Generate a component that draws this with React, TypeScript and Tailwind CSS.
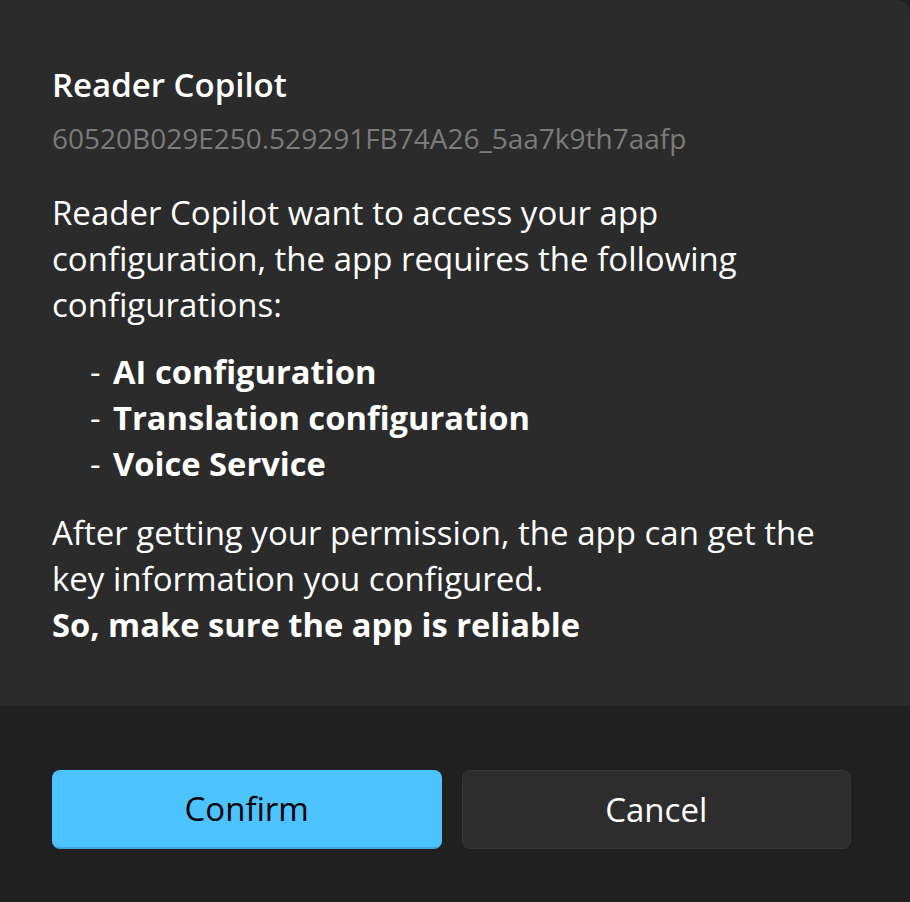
export default function App() {
  const font = { fontFamily: '"Segoe UI", "Open Sans", "Noto Sans", sans-serif' }

  return (
    <div className="w-[910px] h-[902px] flex flex-col bg-[#202020] overflow-hidden" style={font}>
      {/* Content */}
      <div className="h-[706px] shrink-0 bg-[#2b2b2b] rounded-tr-[14px] pl-[52px] pt-[65px] text-white">
        <h1 className="text-[33px] leading-[40px] font-semibold">Reader Copilot</h1>
        <p className="mt-[13px] text-[28px] leading-[40px] text-[#7c7c7c] whitespace-nowrap">
          60520B029E250.529291FB74A26_5aa7k9th7aafp
        </p>

        <div className="mt-[32px] text-[33px] leading-[46px] whitespace-nowrap">
          <p>
            <span className="block">Reader Copilot want to access your app</span>
            <span className="block">configuration, the app requires the following</span>
            <span className="block">configurations:</span>
          </p>

          <ul className="mt-[21px] pl-[38px] font-bold text-[32.7px]">
            <li><span className="font-normal mr-[4px]">- </span>AI configuration</li>
            <li><span className="font-normal mr-[4px]">- </span>Translation configuration</li>
            <li><span className="font-normal mr-[4px]">- </span>Voice Service</li>
          </ul>

          <p className="mt-[23px]">
            <span className="block">After getting your permission, the app can get the</span>
            <span className="block">key information you configured.</span>
            <span className="block font-bold text-[32.7px]">So, make sure the app is reliable</span>
          </p>
        </div>
      </div>

      {/* Footer */}
      <div className="flex-1 border-t border-[#1c1c1c] pl-[52px] pr-[59px] pt-[63px]">
        <div className="grid grid-cols-2 gap-[20px]">
          <button className="h-[79px] rounded-[8px] bg-[#4cc2ff] border-b-2 border-[#3da6dd] text-black text-[33px]">
            Confirm
          </button>
          <button className="h-[79px] rounded-[8px] bg-[#2d2d2d] border border-[#363636] text-white text-[33px]">
            Cancel
          </button>
        </div>
      </div>
    </div>
  )
}
